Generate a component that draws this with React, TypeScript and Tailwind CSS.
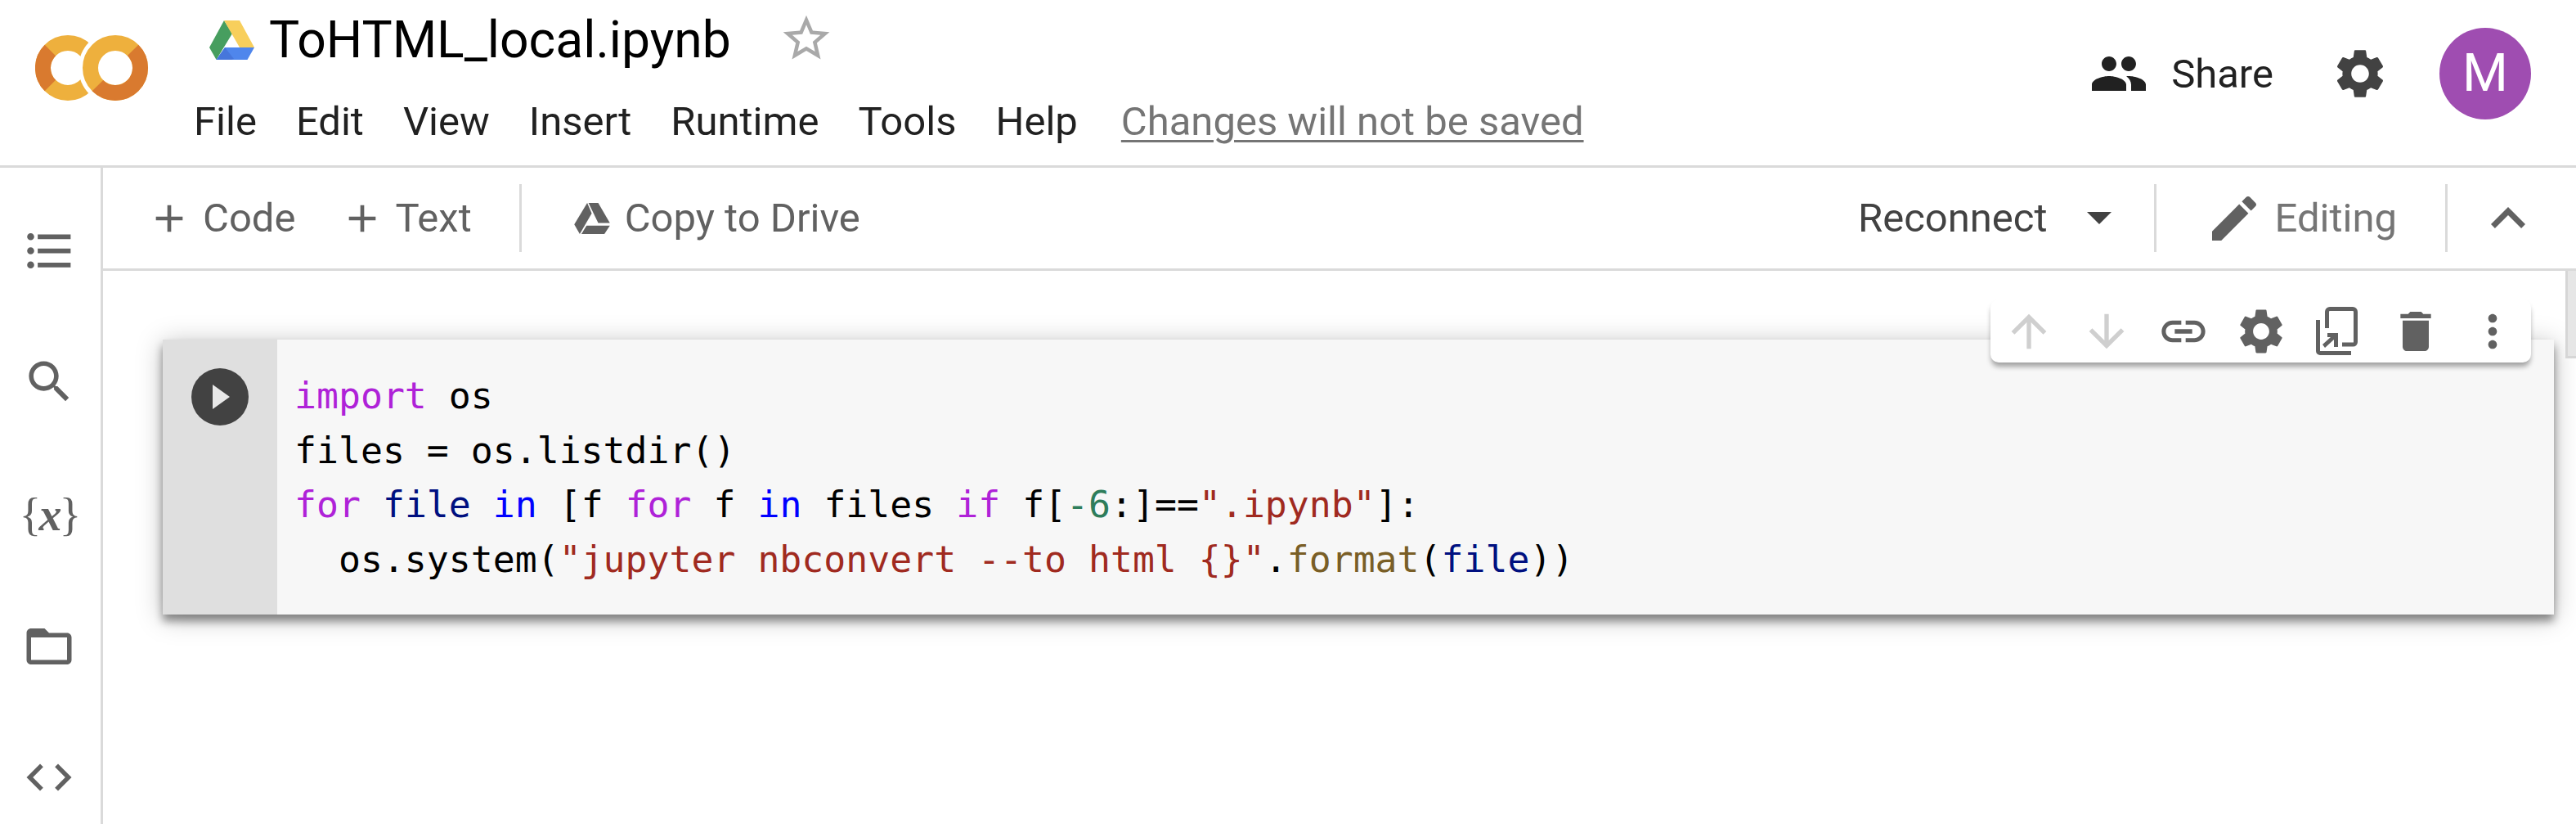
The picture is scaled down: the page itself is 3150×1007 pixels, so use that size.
import React from "react";

const sans = "font-['Roboto',sans-serif]";

// material icon paths
const paths = {
  people:
    "M16 11c1.66 0 2.99-1.34 2.99-3S17.66 5 16 5c-1.66 0-3 1.34-3 3s1.34 3 3 3zm-8 0c1.66 0 2.99-1.34 2.99-3S9.66 5 8 5C6.34 5 5 6.34 5 8s1.34 3 3 3zm0 2c-2.33 0-7 1.17-7 3.5V19h14v-2.5c0-2.33-4.67-3.5-7-3.5zm8 0c-.29 0-.62.02-.97.05 1.16.84 1.97 1.97 1.97 3.45V19h6v-2.5c0-2.33-4.67-3.5-7-3.5z",
  settings:
    "M19.14 12.94c.04-.3.06-.61.06-.94 0-.32-.02-.64-.07-.94l2.03-1.58c.18-.14.23-.41.12-.61l-1.92-3.32c-.12-.22-.37-.29-.59-.22l-2.39.96c-.5-.38-1.03-.7-1.62-.94l-.36-2.54c-.04-.24-.24-.41-.48-.41h-3.84c-.24 0-.43.17-.47.41l-.36 2.54c-.59.24-1.13.57-1.62.94l-2.39-.96c-.22-.08-.47 0-.59.22L2.74 8.87c-.12.21-.08.47.12.61l2.03 1.58c-.05.3-.09.63-.09.94s.02.64.07.94l-2.03 1.58c-.18.14-.23.41-.12.61l1.92 3.32c.12.22.37.29.59.22l2.39-.96c.5.38 1.03.7 1.62.94l.36 2.54c.05.24.24.41.48.41h3.84c.24 0 .44-.17.47-.41l.36-2.54c.59-.24 1.13-.56 1.62-.94l2.39.96c.22.08.47 0 .59-.22l1.92-3.32c.12-.22.07-.47-.12-.61l-2.01-1.58zM12 15.6c-1.98 0-3.6-1.62-3.6-3.6s1.62-3.6 3.6-3.6 3.6 1.62 3.6 3.6-1.62 3.6-3.6 3.6z",
  edit: "M3 17.25V21h3.75L17.81 9.94l-3.75-3.75L3 17.25zM20.71 7.04c.39-.39.39-1.02 0-1.41l-2.34-2.34c-.39-.39-1.02-.39-1.41 0l-1.83 1.83 3.75 3.75 1.83-1.83z",
  less: "M12 8l-6 6 1.41 1.41L12 10.83l4.59 4.58L18 14z",
  link: "M3.9 12c0-1.71 1.39-3.1 3.1-3.1h4V7H7c-2.76 0-5 2.24-5 5s2.24 5 5 5h4v-1.9H7c-1.71 0-3.1-1.39-3.1-3.1zM8 13h8v-2H8v2zm9-6h-4v1.9h4c1.71 0 3.1 1.39 3.1 3.1s-1.39 3.1-3.1 3.1h-4V17h4c2.76 0 5-2.24 5-5s-2.24-5-5-5z",
  up: "M4 12l1.41 1.41L11 7.83V20h2V7.83l5.58 5.59L20 12l-8-8-8 8z",
  down: "M20 12l-1.41-1.41L13 16.17V4h-2v12.17l-5.58-5.59L4 12l8 8 8-8z",
  trash: "M6 19c0 1.1.9 2 2 2h8c1.1 0 2-.9 2-2V7H6v12zM19 4h-3.5l-1-1h-5l-1 1H5v2h14V4z",
  more: "M12 8c1.1 0 2-.9 2-2s-.9-2-2-2-2 .9-2 2 .9 2 2 2zm0 2c-1.1 0-2 .9-2 2s.9 2 2 2 2-.9 2-2-.9-2-2-2zm0 6c-1.1 0-2 .9-2 2s.9 2 2 2 2-.9 2-2-.9-2-2-2z",
  search:
    "M15.5 14h-.79l-.28-.27C15.41 12.59 16 11.11 16 9.5 16 5.91 13.09 3 9.5 3S3 5.91 3 9.5 5.91 16 9.5 16c1.61 0 3.09-.59 4.23-1.57l.27.28v.79l5 4.99L20.49 19l-4.99-5zm-6 0C7.01 14 5 11.99 5 9.5S7.01 5 9.5 5 14 7.01 14 9.5 11.99 14 9.5 14z",
  list: "M4 10.5c-.83 0-1.5.67-1.5 1.5s.67 1.5 1.5 1.5 1.5-.67 1.5-1.5-.67-1.5-1.5-1.5zm0-6c-.83 0-1.5.67-1.5 1.5S3.17 7.5 4 7.5 5.5 6.83 5.5 6 4.83 4.5 4 4.5zm0 12c-.83 0-1.5.68-1.5 1.5s.68 1.5 1.5 1.5 1.5-.68 1.5-1.5-.67-1.5-1.5-1.5zM7 19h14v-2H7v2zm0-6h14v-2H7v2zm0-8v2h14V5H7z",
  folder:
    "M20 6h-8l-2-2H4c-1.1 0-1.99.9-1.99 2L2 18c0 1.1.9 2 2 2h16c1.1 0 2-.9 2-2V8c0-1.1-.9-2-2-2zm0 12H4V8h16v10z",
  code: "M9.4 16.6L4.8 12l4.6-4.6L8 6l-6 6 6 6 1.4-1.4zm5.2 0l4.6-4.6-4.6-4.6L16 6l6 6-6 6-1.4-1.4z",
  add: "M19 13h-6v6h-2v-6H5v-2h6V5h2v6h6v2z",
  star: "M22 9.24l-7.19-.62L12 2 9.19 8.63 2 9.24l5.46 4.73L5.82 21 12 17.27 18.18 21l-1.63-7.03L22 9.24zM12 15.4l-3.76 2.27 1-4.28-3.32-2.88 4.38-.38L12 6.1l1.71 4.04 4.38.38-3.32 2.88 1 4.28L12 15.4z",
};

function Icon({ d, className }: { d: string; className: string }) {
  return (
    <svg viewBox="0 0 24 24" className={`shrink-0 fill-current ${className}`}>
      <path d={d} />
    </svg>
  );
}

function ColabLogo() {
  return (
    <svg viewBox="0 0 140 84" className="w-[140px] h-[84px] shrink-0">
      <g fill="none" strokeWidth="19">
        <circle cx="40" cy="41" r="30.5" stroke="#eeb03d" />
        <path d="M18.4 19.400A30.5 30.500 0 0 0 18.400 62.600" stroke="#d97a2f" />
      </g>
      <circle cx="98" cy="41" r="45" fill="#fff" />
      <g fill="none" strokeWidth="19">
        <circle cx="98" cy="41" r="30.5" stroke="#eeb03d" />
        <path d="M119.600 19.400A30.5 30.500 0 0 1 76.400 62.600" stroke="#d97a2f" />
      </g>
    </svg>
  );
}

function DriveLogo() {
  return (
    <svg viewBox="0 0 55 48" className="w-[55px] h-[48px] shrink-0">
      <path d="M18 0 0 33l8.500 15L28 16Z" fill="#479e5f" />
      <path d="M18 0h19l18 33H37Z" fill="#f8cf5c" />
      <path d="M19 33h36l-8.500 15H8.500Z" fill="#4f86ec" />
      <path d="M19 33 8.500 48H27l3-1Z" fill="#4676db" />
    </svg>
  );
}

function DriveMono() {
  return (
    <svg viewBox="0 0 55 48" className="w-[44px] h-[38px] shrink-0 fill-[#616161]">
      <path d="M20 0 0 33l8.500 15L27 16Z" />
      <path d="M22 0h15l18 31H37Z" />
      <path d="M19 35h36l-8.500 13H11Z" />
    </svg>
  );
}

function MirrorIcon() {
  return (
    <div className="w-[64px] h-[64px] flex items-center justify-center -translate-x-[2px]">
      <svg viewBox="0 0 51 59" className="w-[51px] h-[59px]">
        <g fill="none" stroke="currentColor" strokeWidth="5">
          <path d="M13.500 26V6a3.500 3.500 0 0 1 3.500-3.500h28a3.500 3.500 0 0 1 3.500 3.500v37a3 3 0 0 1-3 3H32" />
          <path d="M2.500 16V54a2.500 2.500 0 0 0 2.500 2.500H43" />
        </g>
        <path d="M14 32h13v17h-5v-9L11 50l-3-4 10-9h-4z" fill="currentColor" />
      </svg>
    </div>
  );
}

const menus = ["File", "Edit", "View", "Insert", "Runtime", "Tools", "Help"];

function Header() {
  return (
    <header className={`h-[205px] border-b-[3px] border-[#dadada] flex ${sans}`}>
      <div className="w-[237px] shrink-0 pl-[43px] pt-[42px]">
        <ColabLogo />
      </div>
      <div className="flex-1 flex flex-col">
        <div className="flex items-center h-[118px] pl-[19px] pb-[20px]">
          <DriveLogo />
          <span className="ml-[18px] text-[62.4px] leading-none text-black">ToHTML_local.ipynb</span>
          <Icon d={paths.star} className="ml-[58px] w-[68px] h-[68px] text-[#a9a9a9] -mt-[5px]" />
        </div>
        <nav className="flex items-center gap-[48px] h-[60px] text-[49px] leading-none text-[#212121]">
          {menus.map((m) => (
            <span key={m}>{m}</span>
          ))}
          <span className="ml-[5px] text-[#757575] underline decoration-[3px] underline-offset-[6px]">
            Changes will not be saved
          </span>
        </nav>
      </div>
      <div className="flex items-center h-[180px] pr-[55px] shrink-0">
        <Icon d={paths.people} className="w-[72px] h-[72px] text-[#212121]" />
        <span className="ml-[28px] text-[49px] leading-none text-[#212121]">Share</span>
        <Icon d={paths.settings} className="ml-[70px] w-[72px] h-[72px] text-[#424242]" />
        <div className="ml-[61px] w-[112px] h-[112px] rounded-full bg-[#9f4db1] flex items-center justify-center text-white text-[64px] leading-none">
          M
        </div>
      </div>
    </header>
  );
}

function Sidebar() {
  return (
    <aside className="w-[126px] shrink-0 border-r-[3px] border-[#dadada] flex flex-col items-center text-[#616161] pt-[67px] pr-[3px] h-[802px]">
      <Icon d={paths.list} className="w-[69px] h-[69px]" />
      <Icon d={paths.search} className="w-[67px] h-[67px] mt-[92px]" />
      <span className="mt-[96px] h-[66px] text-[56px] leading-[66px] tracking-[-3px] font-['Liberation_Serif',serif]">
        {"{"}
        <span className="italic font-bold">x</span>
        {"}"}
      </span>
      <Icon d={paths.folder} className="w-[66px] h-[66px] mt-[95px]" />
      <Icon d={paths.code} className="w-[66px] h-[66px] mt-[94px]" />
    </aside>
  );
}

function Toolbar() {
  return (
    <div className={`h-[126px] border-b-[3px] border-[#dadada] flex items-center text-[49px] leading-none ${sans}`}>
      <div className="flex items-center h-full pl-[53px] text-[#616161]">
        <Icon d={paths.add} className="w-[56px] h-[56px]" />
        <span className="ml-[13px]">Code</span>
        <Icon d={paths.add} className="w-[56px] h-[56px] ml-[54px]" />
        <span className="ml-[12px]">Text</span>
      </div>
      <div className="w-[3px] h-[83px] bg-[#dadada] ml-[58px]" />
      <div className="ml-[64px]">
        <DriveMono />
      </div>
      <span className="ml-[18px] text-[#616161]">Copy to Drive</span>
      <span className="ml-auto text-[#424242]">Reconnect</span>
      <svg viewBox="0 0 30 15" className="ml-[48px] w-[30px] h-[15px] fill-[#424242]">
        <path d="M0 0h30L15 15Z" />
      </svg>
      <div className="w-[3px] h-[83px] bg-[#dadada] ml-[52px]" />
      <Icon d={paths.edit} className="ml-[59px] w-[72px] h-[72px] text-[#616161]" />
      <span className="ml-[14px] text-[#757575]">Editing</span>
      <div className="w-[3px] h-[83px] bg-[#dadada] ml-[59px]" />
      <Icon d={paths.less} className="ml-[32px] w-[84px] h-[84px] text-[#616161] mr-[41px]" />
    </div>
  );
}

function CellToolbar() {
  const base = "w-[64px] h-[64px]";
  return (
    <div className="absolute top-[35px] right-[55px] w-[661px] h-[77px] rounded-[10px] bg-white shadow-[0_6px_6px_-1px_rgba(0,0,0,0.35)] flex items-center justify-between px-[15px] text-[#616161]">
      <Icon d={paths.up} className={`${base} text-[#cfcfcf]`} />
      <Icon d={paths.down} className={`${base} text-[#cfcfcf]`} />
      <Icon d={paths.link} className={base} />
      <Icon d={paths.settings} className="w-[66px] h-[66px] -mx-[1px]" />
      <MirrorIcon />
      <Icon d={paths.trash} className={base} />
      <Icon d={paths.more} className={base} />
    </div>
  );
}

const kw = "text-[#af22d8]";
const blue = "text-[#0000ff]";
const navy = "text-[#001080]";
const str = "text-[#a02a20]";

function Cell() {
  return (
    <div className="flex h-[336px] mt-[84px] ml-[73px] mr-[27px] bg-[#f7f7f7] shadow-[0_8px_10px_rgba(0,0,0,0.4),0_4px_30px_rgba(0,0,0,0.25)]">
      <div className="w-[140px] shrink-0 bg-[#dfdfdf] pl-[35px] pt-[35px]">
        <div className="w-[70px] h-[70px] rounded-full bg-[#424242] flex items-center justify-center">
          <svg viewBox="0 0 21 30" className="w-[21px] h-[30px] fill-[#e8e8e8] ml-[3px]">
            <path d="M0 0l21 15L0 30Z" />
          </svg>
        </div>
      </div>
      <pre className="pl-[21px] pt-[36px] text-[44.8px] leading-[66.6px] font-['DejaVu_Sans_Mono',monospace] text-black">
        <span className={kw}>import</span> os{"\n"}
        files = os.listdir(){"\n"}
        <span className={kw}>for</span> <span className={navy}>file</span> <span className={blue}>in</span> [f <span className={kw}>for</span> f <span className={blue}>in</span> files <span className={kw}>if</span> f[<span className="text-[#2e7d5b]">-6</span>:]==<span className={str}>".ipynb"</span>]:{"\n"}
        {"  "}os.system(<span className={str}>"jupyter nbconvert --to html {"{}"}"</span>.<span className="text-[#795e26]">format</span>(<span className={navy}>file</span>))
      </pre>
    </div>
  );
}

export default function App() {
  return (
    <div className="w-[3150px] h-[1007px] bg-white overflow-hidden">
      <Header />
      <div className="flex">
        <Sidebar />
        <div className="flex-1 flex flex-col min-w-0">
          <Toolbar />
          <div className="relative flex-1">
            <Cell />
            <CellToolbar />
            <div className="absolute top-0 right-0 w-[13px] h-[107px] bg-[#e6e6e6] border-l-[3px] border-b-[3px] border-[#d6d6d6]" />
          </div>
        </div>
      </div>
    </div>
  );
}
